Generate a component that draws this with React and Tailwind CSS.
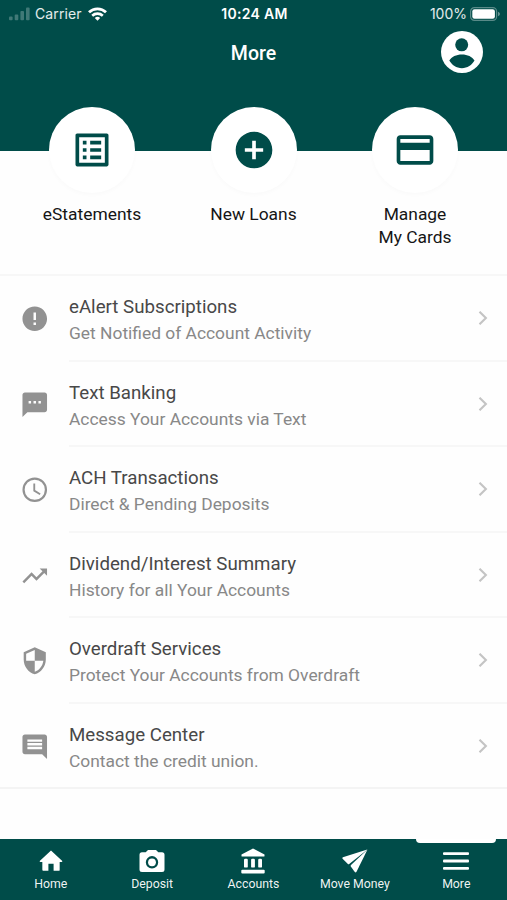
/**
 * App.jsx — "More" screen of the mobile banking app.
 *
 * Layout, top to bottom: status bar + title, quick actions that overlap
 * the header edge, the list of services, and the tab bar.
 */

import {
    MdAddCircle,
    MdError,
    MdTextsms,
    MdTrendingUp,
    MdSecurity,
} from "react-icons/md";

function ListAltIcon({ className }) {
    return (
        <svg viewBox="0 0 24 24" fill="currentColor" className={className} aria-hidden="true">
            <path d="M19 5v14H5V5h14m1.1-2H3.9c-.5 0-.9.4-.9.9v16.2c0 .4.4.9.9.9h16.2c.4 0 .9-.5.9-.9V3.9c0-.5-.5-.9-.9-.9zM11 7h6v2h-6V7zm0 4h6v2h-6v-2zm0 4h6v2h-6zM7 7h2v2H7zm0 4h2v2H7zm0 4h2v2H7z" />
        </svg>
    );
}

function CardIcon({ className }) {
    return (
        <svg viewBox="0 0 24 24" fill="currentColor" className={className} aria-hidden="true">
            <path d="M20 4H4c-1.11 0-1.99.89-1.99 2L2 18c0 1.11.89 2 2 2h16c1.11 0 2-.89 2-2V6c0-1.11-.89-2-2-2zm0 14H4v-6h16v6zm0-10H4V6h16v2z" />
        </svg>
    );
}

function ClockIcon({ className }) {
    return (
        <svg viewBox="0 0 24 24" fill="none" stroke="currentColor" className={className} aria-hidden="true">
            <circle cx="12" cy="12" r="9.1" strokeWidth="1.8" />
            <path d="M11.6 7v5.7l4.8 2.9" strokeWidth="1.5" />
        </svg>
    );
}

function MessageIcon({ className }) {
    return (
        <svg viewBox="0 0 24 24" fill="currentColor" className={className} aria-hidden="true">
            <path d="M21.99 4c0-1.1-.89-2-1.99-2H4c-1.1 0-2 .9-2 2v12c0 1.1.9 2 2 2h14l4 4-.01-18zM18 14H6v-2h12v2zm0-3H6V9h12v2zm0-3H6V6h12v2z" />
        </svg>
    );
}

function ProfileIcon() {
    return (
        <svg viewBox="0 0 42 42" className="size-[42px]" aria-hidden="true">
            <circle cx="21" cy="21" r="21" fill="#fff" />
            <circle cx="20.7" cy="13.8" r="6.5" fill="#004c49" />
            <path d="M8.3 29.6c2.3-4 7-6.2 12.6-6.2s10.3 2.2 12.6 6.2c-2.5 4.5-7.2 7.6-12.6 7.6s-10.1-3.1-12.6-7.6z" fill="#004c49" />
        </svg>
    );
}

function SignalIcon() {
    return (
        <svg viewBox="0 0 21 14" className="h-[14px] w-[21px] opacity-25" fill="#fff" aria-hidden="true">
            <rect x="0" y="9.5" width="3.6" height="3.8" rx="1" />
            <rect x="5.7" y="7.5" width="3.6" height="5.8" rx="1" />
            <rect x="11.4" y="4" width="3.6" height="9.3" rx="1" />
            <rect x="17" y="0.5" width="3.6" height="12.8" rx="1" />
        </svg>
    );
}

function WifiIcon() {
    return (
        <svg viewBox="0 0 19 14" className="h-[14px] w-[19px]" fill="none" stroke="#fff" aria-hidden="true">
            <path d="M1 5.3a12.2 12.2 0 0 1 17 0" strokeWidth="2.8" />
            <path d="M4.2 8.7a7.7 7.7 0 0 1 10.6 0" strokeWidth="2.6" />
            <path d="M9.5 13.8l-2.7-2.7a3.9 3.9 0 0 1 5.4 0z" fill="#fff" stroke="none" />
        </svg>
    );
}

function BatteryIcon() {
    return (
        <svg viewBox="0 0 30 14" className="h-[14px] w-[30px]" aria-hidden="true">
            <rect x="0.6" y="0.6" width="26" height="12.8" rx="3.8" fill="none" stroke="#fff" strokeOpacity="0.35" strokeWidth="1.2" />
            <rect x="2.3" y="2.3" width="22.6" height="9.4" rx="2.2" fill="#fff" />
            <path d="M28 4.8c1.3.5 1.9 1.2 1.9 2.2s-.6 1.7-1.9 2.2z" fill="#fff" fillOpacity="0.4" />
        </svg>
    );
}

function HomeIcon() {
    return (
        <svg viewBox="0 0 24 24" fill="#fff" className="size-[26px]" aria-hidden="true">
            <path d="M12 2.2 1.6 11.9q-.3 1 .7 1H4v7.2Q4 21 4.8 21h4.8v-6.5h4.8V21h4.8q.8 0 .8-.8v-7.3h1.7q1 0 .7-1z" />
        </svg>
    );
}

function CameraIcon() {
    return (
        <svg viewBox="0 0 26 24" fill="#fff" className="h-[24px] w-[26px]" aria-hidden="true">
            <path
                fillRule="evenodd"
                d="M9 1h8l2.3 2.3H23A2.5 2.5 0 0 1 25.5 5.8V20.5A2.5 2.5 0 0 1 23 23H3A2.5 2.5 0 0 1 .5 20.5V5.8A2.5 2.5 0 0 1 3 3.3h3.7zM13 7.1a6.2 6.2 0 1 0 0 12.4 6.2 6.2 0 0 0 0-12.4z"
            />
            <circle cx="13" cy="13.3" r="3.9" />
        </svg>
    );
}

function BankIcon() {
    return (
        <svg viewBox="0 0 26 26" fill="#fff" className="size-[26px]" aria-hidden="true">
            <path d="M13 .5 1.5 6.4v1.5q0 .7.7.7h21.6q.7 0 .7-.7V6.4z" />
            <rect x="4" y="10.8" width="3.8" height="8.8" rx="1.2" />
            <rect x="11.1" y="10.8" width="3.8" height="8.8" rx="1.2" />
            <rect x="18.2" y="10.8" width="3.8" height="8.8" rx="1.2" />
            <rect x="1.3" y="21.8" width="23.4" height="3.7" rx="1" />
        </svg>
    );
}

function PlaneIcon() {
    return (
        <svg viewBox="0 0 26 24" fill="#fff" className="h-[24px] w-[26px]" aria-hidden="true">
            <path d="M25.3.4.9 8.3q-1 .6-.3 1.500l5.300 5.200q.6.500 1.300-.1L23.300 2.200z" />
            <path d="M25.500.6 9 15.900q-.7.700-.2 1.500l4 5.600q.9 1 1.700-.2z" />
        </svg>
    );
}

function MenuIcon() {
    return (
        <svg viewBox="0 0 26 20" fill="#fff" className="h-[20px] w-[26px]" aria-hidden="true">
            <rect y="1.2" width="26" height="2.8" rx="1" />
            <rect y="8.6" width="26" height="2.8" rx="1" />
            <rect y="16" width="26" height="2.8" rx="1" />
        </svg>
    );
}

function ChevronIcon() {
    return (
        <svg viewBox="0 0 10 14" className="mt-px h-[14px] w-[10px]" fill="none" stroke="#c4c4c4" strokeWidth="2.1" aria-hidden="true">
            <path d="M1.5 .7 7.9 7l-6.4 6.3" />
        </svg>
    );
}

const quickActions = [
    { lines: ["eStatements"], icon: ListAltIcon },
    { lines: ["New Loans"], icon: MdAddCircle },
    { lines: ["Manage", "My Cards"], icon: CardIcon },
];

const services = [
    { title: "eAlert Subscriptions", text: "Get Notified of Account Activity", icon: MdError },
    { title: "Text Banking", text: "Access Your Accounts via Text", icon: MdTextsms },
    { title: "ACH Transactions", text: "Direct & Pending Deposits", icon: ClockIcon },
    { title: "Dividend/Interest Summary", text: "History for all Your Accounts", icon: MdTrendingUp },
    { title: "Overdraft Services", text: "Protect Your Accounts from Overdraft", icon: MdSecurity },
    { title: "Message Center", text: "Contact the credit union.", icon: MessageIcon },
];

const tabs = [
    { label: "Home", icon: <HomeIcon /> },
    { label: "Deposit", icon: <CameraIcon /> },
    { label: "Accounts", icon: <BankIcon /> },
    { label: "Move Money", icon: <PlaneIcon /> },
    { label: "More", icon: <MenuIcon />, active: true },
];

function StatusBar() {
    return (
        <div className="grid h-[27px] grid-cols-3 items-center pr-[7px] pl-[9px] font-['Inter',sans-serif] text-[14px] leading-none">
            <div className="flex items-center">
                <SignalIcon />
                <span className="ml-[5px] tracking-[0.1px] text-white/90">Carrier</span>
                <span className="ml-[6px]"><WifiIcon /></span>
            </div>
            <span className="text-center text-[14px] font-semibold tracking-[0.3px]">10:24 AM</span>
            <div className="flex items-center justify-end">
                <span className="mr-[3px] text-white/90">100%</span>
                <BatteryIcon />
            </div>
        </div>
    );
}

function Header() {
    return (
        <header className="h-[151px] shrink-0 bg-[#004c49] text-white">
            <StatusBar />
            <div className="grid h-[50px] grid-cols-3 items-center pr-6">
                <span />
                <h1 className="pt-[3px] pl-6 text-center text-[19.5px] font-medium">More</h1>
                <div className="flex justify-end">
                    <ProfileIcon />
                </div>
            </div>
        </header>
    );
}

function QuickAction({ lines, icon: Icon }) {
    return (
        <div className="flex w-[161.5px] flex-col items-center">
            <div className="flex size-[86px] items-center justify-center rounded-full bg-white shadow-[0_2px_4px_rgba(0,0,0,0.02)]">
                <Icon className="size-[44px] text-[#004c49]" />
            </div>
            <div className="mt-[10px] text-center text-[17.4px] leading-[23px] text-[#151515]">
                {lines.map((line) => (
                    <div key={line}>{line}</div>
                ))}
            </div>
        </div>
    );
}

function ServiceRow({ title, text, icon: Icon, last }) {
    return (
        <li className={`flex h-[85.5px] ${last ? "border-b-2 border-[#f4f4f4]" : ""}`}>
            <div className={`flex w-[69px] items-center pl-5 ${last ? "pt-[2px]" : ""}`}>
                <Icon className="size-[29.5px] text-[#929292]" />
            </div>
            <div className={`flex flex-1 items-center justify-between pr-[19px] ${last ? "" : "border-b-2 border-[#f7f7f7]"}`}>
                <div className="pt-[5px]">
                    <div className="text-[18.7px] leading-[26px] text-[#484848]">{title}</div>
                    <div className="text-[17.4px] leading-[26px] text-[#888888]">{text}</div>
                </div>
                <ChevronIcon />
            </div>
        </li>
    );
}

function TabBar() {
    return (
        <nav className="grid h-[61px] shrink-0 grid-cols-5 bg-[#004c49] text-white">
            {tabs.map((tab) => (
                <div key={tab.label} className="relative flex flex-col items-center">
                    {tab.active && <span className="absolute top-0 h-1 w-[80px] rounded-b-[4px] bg-white" />}
                    <div className="mt-[8px] flex h-[28px] items-center">{tab.icon}</div>
                    <span className="text-[12.3px] leading-[18px] text-white/95">{tab.label}</span>
                </div>
            ))}
        </nav>
    );
}

export default function App() {
    return (
        <div className="flex h-[900px] w-full flex-col overflow-hidden bg-[#fefefe] font-['Roboto',sans-serif]">
            <Header />
            <section className="-mt-[44px] flex h-[168px] shrink-0 justify-center">
                {quickActions.map((action) => (
                    <QuickAction key={action.lines[0]} {...action} />
                ))}
            </section>
            <ul className="-mt-px flex-1 border-t-2 border-[#f7f7f7]">
                {services.map((service, i) => (
                    <ServiceRow key={service.title} {...service} last={i === services.length - 1} />
                ))}
            </ul>
            <TabBar />
        </div>
    );
}
